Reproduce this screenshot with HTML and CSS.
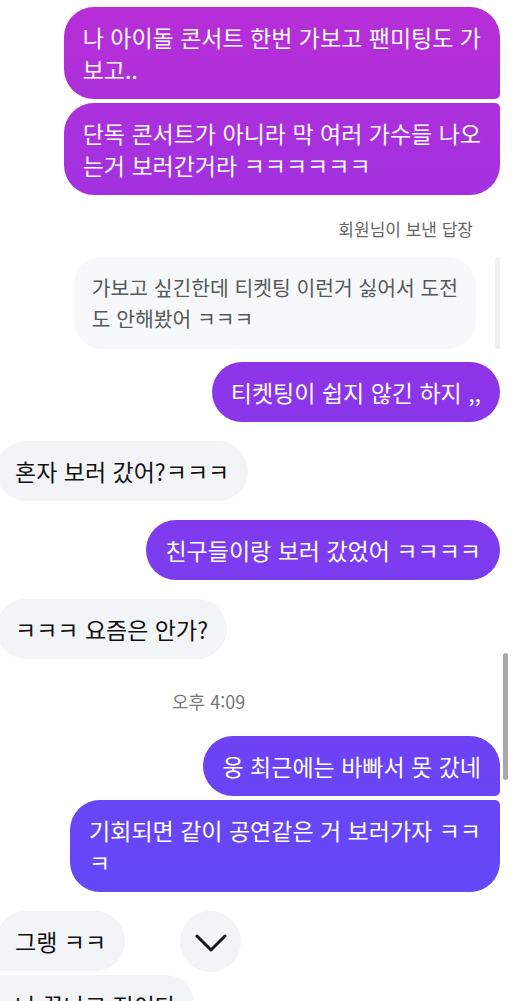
FILE: index.html
```html
<!DOCTYPE html>
<html lang="ko">
<head>
  <meta charset="UTF-8">
  <meta name="viewport" content="width=device-width, initial-scale=1.0">
  <title>Direct</title>
  <link rel="stylesheet" href="styles.css">
</head>
<body>
  <main class="thread">
    <div class="group">
      <p class="bubble out first">나 아이돌 콘서트 한번 가보고 팬미팅도 가<br>보고..</p>
      <p class="bubble out last">단독 콘서트가 아니라 막 여러 가수들 나오<br>는거 보러간거라 ㅋㅋㅋㅋㅋㅋ</p>
    </div>

    <div class="reply-label">회원님이 보낸 답장</div>
    <div class="reply-row">
      <p class="reply-bubble">가보고 싶긴한데 티켓팅 이런거 싫어서 도전<br>도 안해봤어 ㅋㅋㅋ</p>
      <span class="reply-bar"></span>
    </div>
    <div class="group after-reply">
      <p class="bubble out">티켓팅이 쉽지 않긴 하지 ,,</p>
    </div>

    <div class="group">
      <p class="bubble in">혼자 보러 갔어?ㅋㅋㅋ</p>
    </div>
    <div class="group">
      <p class="bubble out">친구들이랑 보러 갔었어 ㅋㅋㅋㅋ</p>
    </div>
    <div class="group">
      <p class="bubble in">ㅋㅋㅋ 요즘은 안가?</p>
    </div>

    <div class="time">오후 4:09</div>
    <div class="group after-time">
      <p class="bubble out first">웅 최근에는 바빠서 못 갔네</p>
      <p class="bubble out last">기회되면 같이 공연같은 거 보러가자 ㅋㅋ<br>ㅋ</p>
    </div>

    <div class="group">
      <p class="bubble in first">그랭 ㅋㅋ</p>
      <p class="bubble in last">나 끝나고 집이다</p>
    </div>
  </main>

  <button class="jump-down" aria-label="최근 메시지로 이동">
    <svg width="32" height="20" viewBox="0 0 32 20">
      <path d="M2 3 L16 17 L30 3" fill="none" stroke="#161616" stroke-width="3" stroke-linecap="round" stroke-linejoin="round"/>
    </svg>
  </button>
  <div class="scroll-thumb"></div>
</body>
</html>
```

FILE: styles.css
```css
html, body {
  margin: 0;
  padding: 0;
  overflow: hidden;
  background: #fff;
}

body {
  font-family: "Noto Sans CJK KR", "Noto Sans", sans-serif;
  color: #111;
}

.thread {
  display: flex;
  flex-direction: column;
  padding: 7px 12px 0 0;
}

.group {
  display: flex;
  flex-direction: column;
  gap: 4px;
  margin-top: 19px;
}

.group:first-child {
  margin-top: 0;
}

.bubble {
  margin: 0;
  padding: 14px 19px;
  font-size: 23px;
  line-height: 32px;
  white-space: nowrap;
  border-radius: 30px;
}

.bubble.out {
  align-self: flex-end;
  color: #fff;
  background: linear-gradient(180deg, #b82ed6 0%, #8c35ea 39%, #6a44f5 77%, #5d4cf9 100%) fixed;
}

.bubble.in {
  align-self: flex-start;
  margin-left: -4px;
  background: #f3f4f6;
}

.bubble.out.first { border-bottom-right-radius: 5px; }
.bubble.out.last { border-top-right-radius: 5px; }
.bubble.in.first { border-bottom-left-radius: 5px; }
.bubble.in.last { border-top-left-radius: 5px; }

/* reply */
.reply-label {
  align-self: flex-end;
  margin: 24px 27px 0 0;
  font-size: 17px;
  line-height: 20px;
  color: #666;
}

.reply-row {
  align-self: flex-end;
  display: flex;
  gap: 19px;
  margin-top: 18px;
}

.reply-bubble {
  margin: 0;
  padding: 15px 18px;
  font-size: 20.4px;
  line-height: 31px;
  white-space: nowrap;
  color: #585858;
  background: #f7f8fa;
  border-radius: 28px;
}

.reply-bar {
  width: 5px;
  border-radius: 3px;
  background: #eff0f2;
}

.group.after-reply {
  margin-top: 13px;
}

.time {
  margin-top: 32px;
  padding-left: 172px;
  font-size: 18px;
  line-height: 20px;
  color: #777;
}

.group.after-time {
  margin-top: 25px;
}

/* overlays */
.jump-down {
  position: absolute;
  left: 180px;
  top: 911px;
  width: 61px;
  height: 61px;
  padding: 0;
  border: none;
  border-radius: 50%;
  background: #f3f4f6;
  display: flex;
  align-items: center;
  justify-content: center;
}

.jump-down svg {
  margin-top: 2px;
}

.scroll-thumb {
  position: absolute;
  left: 503px;
  top: 653px;
  width: 5px;
  height: 127px;
  border-radius: 3px;
  background: #a8a8a8;
}
```
